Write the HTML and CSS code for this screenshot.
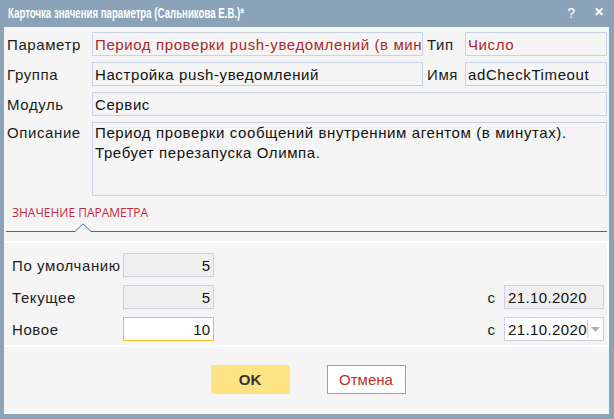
FILE: index.html
```html
<!DOCTYPE html>
<html lang="ru">
<head>
<meta charset="utf-8">
<title>Карточка значения параметра</title>
<link rel="stylesheet" href="styles.css">
</head>
<body>
<div class="window">
  <div class="titlebar">
    <span class="title">Карточка значения параметра (Сальникова Е.В.)*</span>
    <span class="controls"><span class="help">?</span><span class="close">✕</span></span>
  </div>
  <div class="content">
    <div class="form">
      <div class="label">Параметр</div>
      <div class="field red">Период проверки push-уведомлений (в минутах)</div>
      <div class="label label2">Тип</div>
      <div class="field red">Число</div>

      <div class="label">Группа</div>
      <div class="field">Настройка push-уведомлений</div>
      <div class="label label2">Имя</div>
      <div class="field">adCheckTimeout</div>

      <div class="label">Модуль</div>
      <div class="field wide">Сервис</div>

      <div class="label top">Описание</div>
      <div class="field wide memo">Период проверки сообщений внутренним агентом (в минутах).<br>Требует перезапуска Олимпа.</div>
    </div>

    <div class="tabs">
      <div class="tab">ЗНАЧЕНИЕ ПАРАМЕТРА</div>
      <div class="tabline">
        <svg class="notch" width="16" height="9" viewBox="0 0 16 9"><polyline points="0,8.5 8,0.8 16,8.5" fill="none" stroke="#3b6aa3" stroke-width="1"/></svg>
      </div>
    </div>

    <div class="values">
      <div class="vlabel">По умолчанию</div>
      <div class="vbox ro">5</div>
      <div class="spacer"></div>
      <div class="spacer"></div>
      <div class="spacer"></div>

      <div class="vlabel">Текущее</div>
      <div class="vbox ro">5</div>
      <div class="spacer"></div>
      <div class="c">с</div>
      <div class="date ro">21.10.2020</div>

      <div class="vlabel">Новое</div>
      <div class="vbox new">10</div>
      <div class="spacer"></div>
      <div class="c">с</div>
      <div class="date edit"><span class="dtext">21.10.2020</span><span class="dd"><svg width="9" height="5" viewBox="0 0 9 5"><polygon points="0,0 9,0 4.5,5" fill="#a5b1c0"/></svg></span></div>
    </div>

    <div class="buttons">
      <button class="btn ok">OK</button>
      <button class="btn cancel">Отмена</button>
    </div>
  </div>
</div>
</body>
</html>
```

FILE: styles.css
```css
html, body {
  margin: 0;
  padding: 0;
}
body {
  width: 614px;
  height: 419px;
  background: #8ba3b8;
  font-family: "Liberation Sans", Arial, sans-serif;
  overflow: hidden;
}
.window {
  width: 614px;
  height: 419px;
  display: flex;
  flex-direction: column;
}
.titlebar {
  height: 27px;
  display: flex;
  align-items: center;
  justify-content: space-between;
  padding: 0 10px 1px 8px;
  box-sizing: border-box;
  color: #ffffff;
}
.title {
  font-family: "Liberation Sans", sans-serif;
  font-weight: bold;
  font-size: 14px;
  display: inline-block;
  transform: scaleX(0.69);
  transform-origin: left center;
  white-space: nowrap;
}
.controls {
  display: flex;
  gap: 19px;
  font-size: 14px;
}
.help { font-weight: normal; }
.close { font-size: 12px; font-weight: bold; }
.content {
  flex: 1;
  margin: 0 5px 5px 4px;
  background: #f5f5f5;
  display: flex;
  flex-direction: column;
}
.form {
  display: grid;
  grid-template-columns: 85px 331px 42px 142px;
  grid-template-rows: 24px 24px 24px 74px;
  row-gap: 6px;
  padding: 5px 2px 0 3px;
}
.label {
  font-size: 15px;
  letter-spacing: 0.6px;
  color: #1c1c1c;
  display: flex;
  align-items: center;
  white-space: nowrap;
}
.label.top { align-items: flex-start; padding-top: 2px; }
.label2 { padding-left: 4px; }
.field {
  border: 1px solid #c9d2e1;
  background: #f5f5f5;
  font-size: 15px;
  letter-spacing: 0.6px;
  color: #111;
  padding: 0 2px;
  white-space: nowrap;
  overflow: hidden;
  text-overflow: clip;
  display: flex;
  align-items: center;
  min-width: 0;
}
.red { color: #a8282e; }
.wide { grid-column: 2 / 5; }
.memo {
  align-items: flex-start;
  white-space: normal;
  line-height: 20px;
  padding-top: 0;
}
.tabs {
  padding: 9px 2px 0 2px;
}
.tab {
  font-family: "Open Sans", sans-serif;
  font-size: 12px;
  color: #c8283a;
  padding-left: 6px;
  height: 16px;
  line-height: 16px;
}
.tabline {
  position: relative;
  height: 1px;
  margin-top: 10px;
  background: #3b6aa3;
}
.notch {
  position: absolute;
  left: 69px;
  top: -8px;
  background: #f5f5f5;
}
.values {
  margin-top: 9px;
  border-top: 2px solid #ffffff;
  border-right: 2px solid #ffffff;
  border-bottom: 2px solid #ffffff;
  padding: 10px 3px 4px 8px;
  display: grid;
  grid-template-columns: 111px 91px 1fr auto 100px;
  grid-template-rows: 24px 24px 24px;
  row-gap: 8px;
}
.vlabel {
  font-size: 15px;
  letter-spacing: 0.6px;
  color: #1c1c1c;
  display: flex;
  align-items: center;
  white-space: nowrap;
}
.vbox {
  border: 1px solid #c9d2e1;
  font-size: 15px;
  display: flex;
  align-items: center;
  justify-content: flex-end;
  padding: 0 3px;
  color: #111;
}
.ro { background: #efefef; }
.new { background: #ffffff; border-color: #f3c21c; }
.c {
  font-size: 15px;
  display: flex;
  align-items: center;
  padding-right: 9px;
  color: #1c1c1c;
}
.date {
  border: 1px solid #c9d2e1;
  font-size: 15px;
  letter-spacing: 0.4px;
  display: flex;
  align-items: center;
  padding: 0 0 0 3px;
  color: #111;
}
.edit { background: #ffffff; }
.dtext { flex: 1; }
.dd {
  width: 17px;
  height: 18px;
  border-left: 1px solid #c9d2e1;
  display: flex;
  align-items: center;
  justify-content: center;
}
.buttons {
  display: flex;
  justify-content: center;
  gap: 37px;
  padding-top: 18px;
  padding-left: 3px;
}
.btn {
  width: 79px;
  height: 29px;
  font-family: "Liberation Sans", sans-serif;
  font-size: 15px;
  cursor: pointer;
}
.ok {
  background: #fde383;
  border: 1px solid #fde383;
  color: #333333;
  font-weight: bold;
  border-radius: 2px;
}
.cancel {
  background: #ffffff;
  border: 1px solid #8ba3b8;
  color: #c0311f;
}
```
